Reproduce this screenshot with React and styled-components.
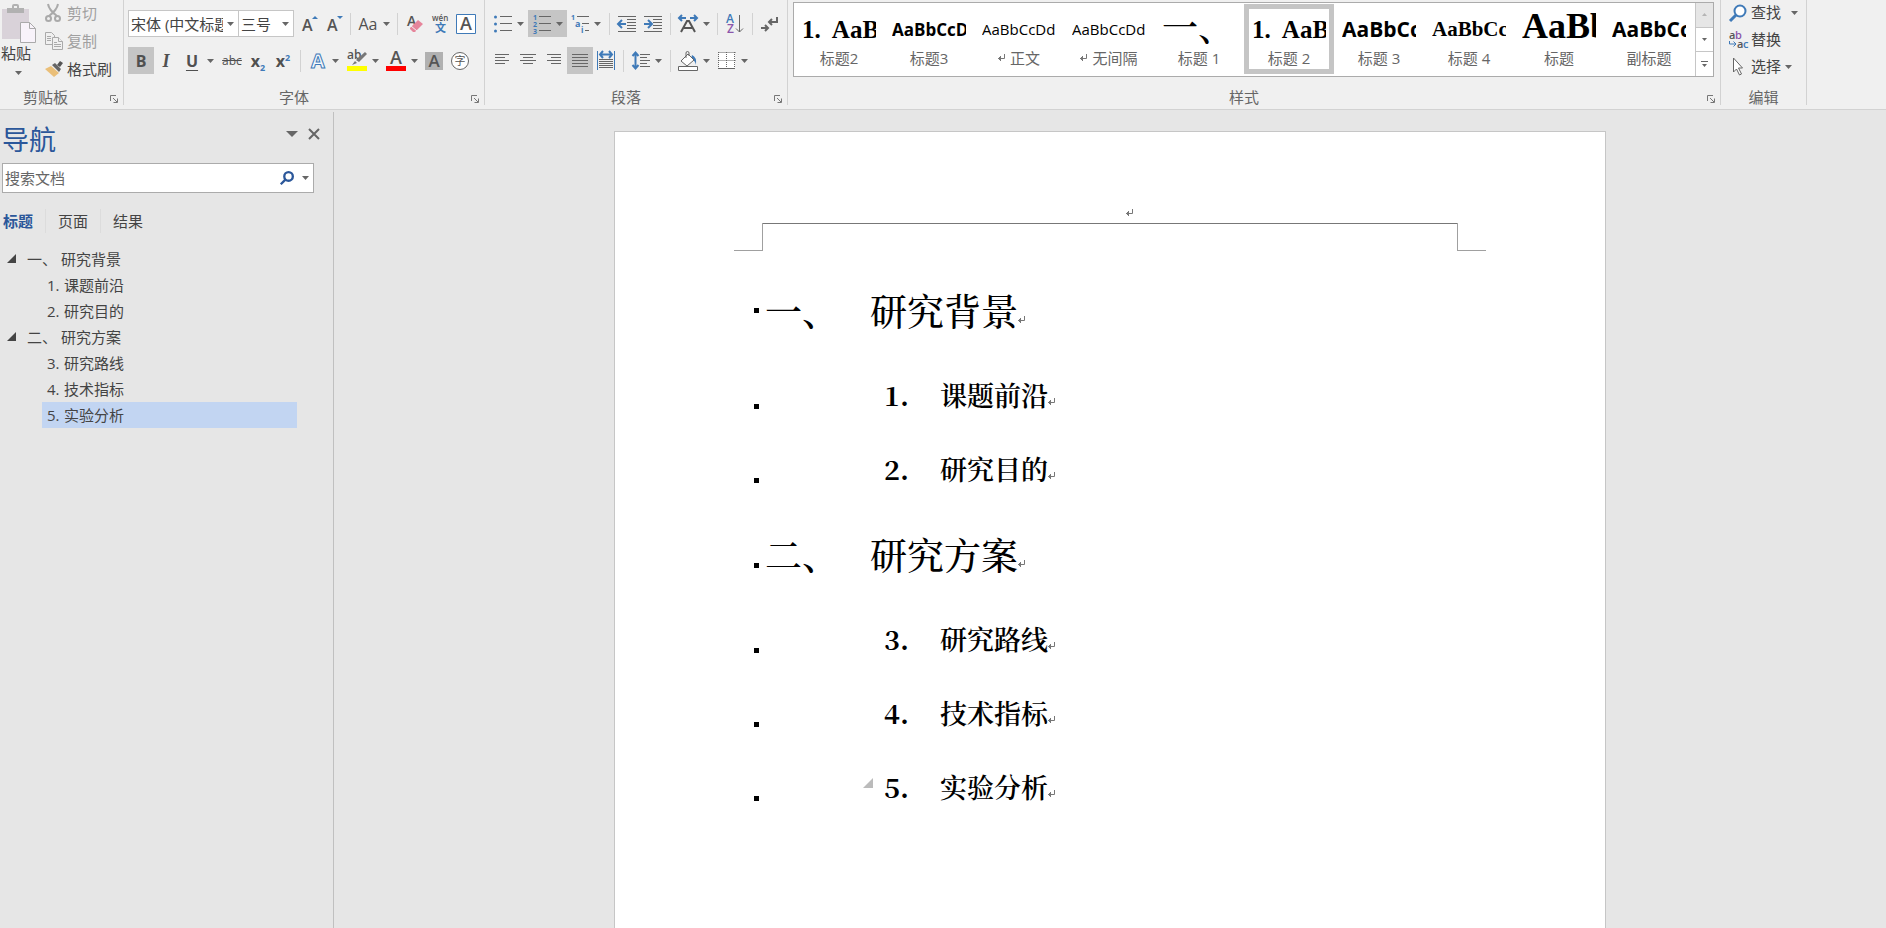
import React, { useState } from "react";
import styled, { createGlobalStyle } from "styled-components";

const GALLERY = [
    { preview: "1.  AaBb", label: "标题2", kind: "serif", size: 25 },
    { preview: "AaBbCcD", label: "标题3", kind: "sansBold", size: 17 },
    { preview: "AaBbCcDd", label: "正文", kind: "sans", size: 15, mark: true },
    { preview: "AaBbCcDd", label: "无间隔", kind: "sans", size: 15, mark: true },
    { preview: "一、", label: "标题 1", kind: "song", size: 36 },
    { preview: "1.  AaBb", label: "标题 2", kind: "serif", size: 25 },
    { preview: "AaBbCc", label: "标题 3", kind: "sansBold", size: 21 },
    { preview: "AaBbCc", label: "标题 4", kind: "serif", size: 21 },
    { preview: "AaBb", label: "标题", kind: "serif", size: 36 },
    { preview: "AaBbCc", label: "副标题", kind: "sansBold", size: 21 },
];

const OUTLINE = [
    { id: 1, level: 1, number: "一、", title: "研究背景" },
    { id: 2, level: 2, number: "1.", title: "课题前沿" },
    { id: 3, level: 2, number: "2.", title: "研究目的" },
    { id: 4, level: 1, number: "二、", title: "研究方案" },
    { id: 5, level: 2, number: "3.", title: "研究路线" },
    { id: 6, level: 2, number: "4.", title: "技术指标" },
    { id: 7, level: 2, number: "5.", title: "实验分析" },
];

const TABS = ["标题", "页面", "结果"];

const BLUE = "#3f7ab8";
const GREY = "#666";

function Caret({ big }) {
    return (
        <svg width={big ? 12 : 7} height={big ? 6 : 4} viewBox="0 0 8 4" preserveAspectRatio="none">
            <path d="M0 0h8L4 4z" fill={GREY} />
        </svg>
    );
}

function Lines({ rows, x = 0, color = GREY }) {
    return rows.map(([from, to, y]) => (
        <path key={y} d={`M${x + from} ${y + 0.5}H${x + to}`} stroke={color} />
    ));
}

function ReturnMark({ color = "#777" }) {
    return (
        <svg width="8" height="8" viewBox="0 0 8 8" fill="none" stroke={color}>
            <path d="M6.500 0v4.500H0M2.500 2v5M1.500 3v3" />
        </svg>
    );
}

function Launcher() {
    return (
        <svg width="8" height="8" viewBox="0 0 8 8" fill="none" stroke="#777">
            <path d="M.5 6V.5H6M3 3l4 4M7.5 3.5v4h-4" />
        </svg>
    );
}

function PasteIcon() {
    return (
        <svg width="36" height="40" viewBox="0 0 36 40">
            <path d="M2 5h27v30H2z" fill="#d9d2d9" />
            <path d="M7 4h5V2q0-2 2-2h3q2 0 2 2v2h5v5H7z" fill="#b1b1b1" />
            <path d="M14 2h3v2h-3z" fill="#f0f0f0" />
            <path d="M20.500 18.500h9l6 6v14h-15z" fill="#f8f3fa" stroke="#aaa" />
            <path d="M29.500 18.500v6h6" fill="none" stroke="#aaa" />
        </svg>
    );
}

function CutIcon() {
    return (
        <svg width="17" height="19" viewBox="0 0 17 19" fill="none" stroke="#aaa" strokeWidth="2">
            <path d="M3 0q1 6 9 12M13 0q-1 6-9 12" />
            <circle cx="3.500" cy="14.500" r="2.500" />
            <circle cx="12.500" cy="14.500" r="2.500" />
        </svg>
    );
}

function CopyIcon() {
    return (
        <svg width="18" height="19" viewBox="0 0 18 19" fill="#f0f0f0" stroke="#aaa">
            <path d="M.5.5h6l3 3v9h-9z" />
            <path d="M2 4.500h4M2 6.500h4M2 8.500h4" />
            <path d="M7.500 5.500h6l4 4v8h-10z" />
            <path d="M13.500 5.500v4h4M9 10.500h3M9 12.500h7M9 14.500h7" />
        </svg>
    );
}

function BrushIcon() {
    return (
        <svg width="18" height="17" viewBox="0 0 18 17">
            <path d="M0 8l6-3 8 7-5 4z" fill="#eabf79" />
            <path d="M7 4l3-2 6 6-2 3z" fill="#666" />
            <path d="M12 4l3-4 3 2-3 4z" fill="#555" />
        </svg>
    );
}

function GrowIcon({ down }) {
    return (
        <svg width="18" height="20" viewBox="0 0 18 20">
            <IconText x="2" y="17" fontSize="16" fontWeight="600">A</IconText>
            <path d={down ? "M12 2h6l-3 3z" : "M12 5h6l-3-3z"} fill={BLUE} />
        </svg>
    );
}

function EraserIcon() {
    return (
        <svg width="18" height="20" viewBox="0 0 18 20">
            <IconText x="1" y="12" fontSize="14" fontWeight="600">A</IconText>
            <path d="M4 14l8-8 5 4-8 8H7l-3-3z" fill="#e6859b" />
            <path d="M5 12l6 5" stroke="#f0f0f0" />
        </svg>
    );
}

function PinyinIcon() {
    return (
        <svg width="18" height="20" viewBox="0 0 18 20">
            <IconText x="1" y="7" fontSize="8" fontWeight="600">wén</IconText>
            <IconText x="4" y="18" fontSize="11" fontWeight="600" fill={BLUE}>文</IconText>
        </svg>
    );
}

function BoxedAIcon() {
    return (
        <svg width="20" height="20" viewBox="0 0 20 20">
            <path d="M.5.5h19v19H.5z" fill="#fff" stroke={BLUE} />
            <IconText x="10" y="16" fontSize="18" fontWeight="600" textAnchor="middle">A</IconText>
        </svg>
    );
}

function OutlineAIcon() {
    return (
        <svg width="18" height="20" viewBox="0 0 18 20">
            <IconText x="9" y="17" fontSize="20" fontWeight="700" textAnchor="middle" fill="#f4f8fc" stroke={BLUE}>A</IconText>
        </svg>
    );
}

function HighlightIcon() {
    return (
        <svg width="20" height="22" viewBox="0 0 20 22">
            <IconText x="0" y="9" fontSize="12" fontWeight="600">ab</IconText>
            <path d="M18 2l2 2-8 8-3-2zM8 11l2 2-5 2z" fill="#777" />
            <path d="M0 16h20v5H0z" fill="#ff0" />
        </svg>
    );
}

function FontColorIcon() {
    return (
        <svg width="20" height="22" viewBox="0 0 20 22">
            <IconText x="10" y="14" fontSize="18" fontWeight="600" textAnchor="middle">A</IconText>
            <path d="M0 16h20v5H0z" fill="red" />
        </svg>
    );
}

function ShadedAIcon() {
    return (
        <svg width="18" height="18" viewBox="0 0 18 18">
            <path d="M0 0h18v18H0z" fill="#b1b1b1" />
            <IconText x="9" y="15" fontSize="17" fontWeight="600" textAnchor="middle">A</IconText>
        </svg>
    );
}

function CircledIcon() {
    return (
        <svg width="18" height="18" viewBox="0 0 18 18">
            <circle cx="9" cy="9" r="8.500" fill="#fff" stroke="#666" />
            <IconText x="9" y="13" fontSize="11" textAnchor="middle">字</IconText>
        </svg>
    );
}

function BulletsIcon() {
    return (
        <svg width="18" height="18" viewBox="0 0 18 18">
            {[2, 9, 16].map((y) => (
                <circle key={y} cx="1.500" cy={y} r="1.500" fill={BLUE} />
            ))}
            <Lines rows={[[6, 18, 1], [6, 18, 8], [6, 18, 15]]} />
        </svg>
    );
}

function NumberingIcon() {
    return (
        <svg width="18" height="20" viewBox="0 0 18 20">
            {[1, 2, 3].map((n) => (
                <IconText key={n} x="0" y={n * 7 - 1} fontSize="7" fontWeight="700" fill={BLUE}>{n}</IconText>
            ))}
            <Lines rows={[[6, 18, 2], [6, 18, 9], [6, 18, 16]]} />
        </svg>
    );
}

function MultilevelIcon() {
    return (
        <svg width="18" height="20" viewBox="0 0 18 20">
            <IconText x="0" y="6" fontSize="7" fontWeight="700" fill={BLUE}>1</IconText>
            <IconText x="4" y="13" fontSize="9" fontWeight="700" fill={BLUE}>a</IconText>
            <IconText x="10" y="19" fontSize="8" fontWeight="700" fill={BLUE}>i</IconText>
            <Lines rows={[[6, 18, 2], [11, 18, 9], [14, 18, 16]]} />
        </svg>
    );
}

function IndentIcon({ more }) {
    return (
        <svg width="18" height="18" viewBox="0 0 18 18">
            <Lines rows={[[0, 18, 1], [9, 18, 4], [9, 18, 7], [9, 18, 10], [9, 18, 13], [0, 18, 16]]} />
            <path d={more ? "M0 9h7M4 5l4 4-4 4" : "M8 9H1M4 5L0 9l4 4"} fill="none" stroke={BLUE} strokeWidth="2" />
        </svg>
    );
}

function ScaleIcon() {
    return (
        <svg width="20" height="18" viewBox="0 0 20 18">
            <path d="M8 3H2M4 0L1 3l3 3M12 3h6M16 0l3 3-3 3" fill="none" stroke={BLUE} strokeWidth="2" />
            <path d="M3 17L9 6h2l6 11M6 13h8" fill="none" stroke="#555" strokeWidth="2" />
        </svg>
    );
}

function SortIcon() {
    return (
        <svg width="18" height="20" viewBox="0 0 18 20">
            <IconText x="0" y="9" fontSize="12" fontWeight="600" fill={BLUE}>A</IconText>
            <IconText x="1" y="19" fontSize="12" fontWeight="600" fill="#8b56ab">Z</IconText>
            <path d="M13.500 1v17M10 14.500l3.500 3.500 3.500-3.500" fill="none" stroke={GREY} />
        </svg>
    );
}

function MarksIcon() {
    return (
        <svg width="18" height="16" viewBox="0 0 18 16" fill="none" stroke="#666" strokeWidth="2">
            <path d="M16 1v5H9M11 3L8 6l3 3M0 12h7M4 9l3 3-3 3" />
        </svg>
    );
}

const ALIGN = {
    left: [[0, 14, 0], [0, 10, 3], [0, 14, 6], [0, 10, 9]],
    center: [[0, 16, 0], [3, 13, 3], [0, 16, 6], [3, 13, 9]],
    right: [[0, 14, 0], [4, 14, 3], [0, 14, 6], [4, 14, 9]],
    justify: [[0, 16, 0], [0, 16, 3], [0, 16, 6], [0, 16, 9], [0, 16, 12]],
};

function AlignIcon({ kind }) {
    return (
        <svg width="16" height="13" viewBox="0 0 16 13">
            <Lines rows={ALIGN[kind]} x={kind === "left" || kind === "right" ? 1 : 0} />
        </svg>
    );
}

function DistributeIcon() {
    return (
        <svg width="18" height="19" viewBox="0 0 18 19">
            <path d="M.5 0v19M17.500 0v19" stroke={BLUE} />
            <path d="M3 3.500h12M6 0L3 3.500 6 7M12 0l3 3.500L12 7" fill="none" stroke={BLUE} strokeWidth="2" />
            <Lines rows={[[2, 16, 8], [2, 16, 10], [2, 16, 12], [2, 16, 14], [2, 16, 16]]} />
        </svg>
    );
}

function LineSpacingIcon() {
    return (
        <svg width="18" height="19" viewBox="0 0 18 19">
            <path d="M3.500 2v15M.5 5l3-3.500L6.500 5M.5 14l3 3.500 3-3.500" fill="none" stroke={BLUE} strokeWidth="2" />
            <Lines rows={[[8, 18, 3], [8, 15, 6], [8, 18, 9], [8, 15, 12], [8, 18, 15]]} />
        </svg>
    );
}

function BucketIcon() {
    return (
        <svg width="20" height="20" viewBox="0 0 20 20">
            <path d="M14 4q5 2 4 10-1-5-5-6z" fill={BLUE} />
            <path d="M10 3l6 6-7 6-6-5z" fill="#fff" stroke={GREY} />
            <path d="M8 7V2q0-1.500 1.500-1.500T11 2v3" fill="none" stroke={GREY} />
            <path d="M.5 15.500h19v4H.5z" fill="#fff" stroke={GREY} />
        </svg>
    );
}

function BordersIcon() {
    return (
        <svg width="18" height="18" viewBox="0 0 18 18">
            <path d="M1 1h16v16H1z" fill="#fff" />
            <path d="M.5.5h17M.5 8.500h17M.5 0v17M8.500 0v17M16.500 0v17" stroke="#666" strokeDasharray="1 1" fill="none" />
            <path d="M0 16.500h17" stroke="#666" />
        </svg>
    );
}

function FindIcon({ size = 18, color = BLUE }) {
    return (
        <svg width={size} height={size} viewBox="0 0 18 18" fill="none" stroke={color} strokeWidth={size < 18 ? 3 : 2}>
            <circle cx="11" cy="7" r="5.500" fill="#fff" />
            <path d="M7 11l-6 6" strokeWidth="3" />
        </svg>
    );
}

function ReplaceIcon() {
    return (
        <svg width="20" height="18" viewBox="0 0 20 18">
            <IconText x="0" y="8" fontSize="11" fontWeight="600">a</IconText>
            <IconText x="6" y="8" fontSize="11" fontWeight="600" fill="#8b56ab">b</IconText>
            <IconText x="8" y="17" fontSize="11" fontWeight="600">a</IconText>
            <IconText x="14" y="17" fontSize="11" fontWeight="600" fill={BLUE}>c</IconText>
            <path d="M.5 10v3h6M4.500 10.500L7 13l-2.500 2.500" fill="none" stroke={BLUE} />
        </svg>
    );
}

function SelectIcon() {
    return (
        <svg width="18" height="19" viewBox="0 0 18 19">
            <path d="M4.500 1v14l3-3 3 6 2-1-3-6h4z" fill="#fff" stroke={GREY} />
        </svg>
    );
}

function Tool({ label, width = 26, active, drop, children }) {
    return (
        <ToolButton type="button" aria-label={label} title={label} $width={width} $active={active}>
            {children}
            {drop && <Caret />}
        </ToolButton>
    );
}

function Clipboard() {
    return (
        <Group $width={124}>
            <ClipboardTools>
                <PasteButton type="button">
                    <PasteIcon />
                    <span>粘贴</span>
                    <Caret />
                </PasteButton>
                <CommandList>
                    <Command type="button" disabled><IconSlot><CutIcon /></IconSlot>剪切</Command>
                    <Command type="button" disabled><IconSlot><CopyIcon /></IconSlot>复制</Command>
                    <Command type="button"><IconSlot><BrushIcon /></IconSlot>格式刷</Command>
                </CommandList>
            </ClipboardTools>
            <GroupFooter $left={23}>
                <span>剪贴板</span>
                <LaunchButton type="button" aria-label="剪贴板设置"><Launcher /></LaunchButton>
            </GroupFooter>
        </Group>
    );
}

function FontGroup() {
    return (
        <Group $width={361}>
            <ToolRows>
                <ToolRow>
                    <Combo $width={111}>
                        <select aria-label="字体">
                            <option>宋体 (中文标题)</option>
                        </select>
                        <Caret />
                    </Combo>
                    <Combo $width={56} $joined>
                        <select aria-label="字号">
                            <option>三号</option>
                        </select>
                        <Caret />
                    </Combo>
                    <Spacer />
                    <Tool label="增大字号"><GrowIcon /></Tool>
                    <Tool label="减小字号" width={24}><GrowIcon down /></Tool>
                    <Divider />
                    <Tool label="更改大小写" width={38} drop><Glyph $size={16}>Aa</Glyph></Tool>
                    <Divider />
                    <Tool label="清除格式"><EraserIcon /></Tool>
                    <Tool label="拼音指南" width={24}><PinyinIcon /></Tool>
                    <Tool label="字符边框" width={28}><BoxedAIcon /></Tool>
                </ToolRow>
                <ToolRow>
                    <Tool label="加粗" active><Glyph $size={16} $bold>B</Glyph></Tool>
                    <Tool label="倾斜" width={24}><Glyph $size={18} $bold $italic>I</Glyph></Tool>
                    <Tool label="下划线" width={40} drop><Glyph $size={16} $bold $line="underline" $width={20}>U</Glyph></Tool>
                    <Tool label="删除线" width={28}><Glyph $size={12} $line="line-through">abc</Glyph></Tool>
                    <Tool label="下标" width={24}><Glyph $size={16} $bold>x<sub>2</sub></Glyph></Tool>
                    <Tool label="上标"><Glyph $size={16} $bold>x<sup>2</sup></Glyph></Tool>
                    <Divider />
                    <Tool label="文本效果" width={38} drop><OutlineAIcon /></Tool>
                    <Tool label="突出显示" width={40} drop><HighlightIcon /></Tool>
                    <Tool label="字体颜色" width={38} drop><FontColorIcon /></Tool>
                    <Tool label="字符底纹"><ShadedAIcon /></Tool>
                    <Tool label="带圈字符"><CircledIcon /></Tool>
                </ToolRow>
            </ToolRows>
            <GroupFooter $launcher>
                <span>字体</span>
                <LaunchButton type="button" aria-label="字体设置"><Launcher /></LaunchButton>
            </GroupFooter>
        </Group>
    );
}

function ParagraphGroup() {
    return (
        <Group $width={303}>
            <ToolRows>
                <ToolRow>
                    <Tool label="项目符号" width={39} drop><BulletsIcon /></Tool>
                    <Tool label="编号" width={39} drop active><NumberingIcon /></Tool>
                    <Tool label="多级列表" width={38} drop><MultilevelIcon /></Tool>
                    <Divider />
                    <Tool label="减少缩进量"><IndentIcon /></Tool>
                    <Tool label="增加缩进量"><IndentIcon more /></Tool>
                    <Divider />
                    <Tool label="中文版式" width={38} drop><ScaleIcon /></Tool>
                    <Divider />
                    <Tool label="排序"><SortIcon /></Tool>
                    <Divider />
                    <Tool label="显示编辑标记"><MarksIcon /></Tool>
                </ToolRow>
                <ToolRow>
                    <Tool label="左对齐"><AlignIcon kind="left" /></Tool>
                    <Tool label="居中"><AlignIcon kind="center" /></Tool>
                    <Tool label="右对齐"><AlignIcon kind="right" /></Tool>
                    <Tool label="两端对齐" active><AlignIcon kind="justify" /></Tool>
                    <Tool label="分散对齐"><DistributeIcon /></Tool>
                    <Divider />
                    <Tool label="行距" width={38} drop><LineSpacingIcon /></Tool>
                    <Divider />
                    <Tool label="底纹" width={38} drop><BucketIcon /></Tool>
                    <Tool label="边框" width={39} drop><BordersIcon /></Tool>
                </ToolRow>
            </ToolRows>
            <GroupFooter $launcher>
                <span>段落</span>
                <LaunchButton type="button" aria-label="段落设置"><Launcher /></LaunchButton>
            </GroupFooter>
        </Group>
    );
}

function StylesGroup() {
    const [current, setCurrent] = useState(5);

    return (
        <Group $width={933}>
            <Gallery>
                <GalleryItems>
                    {GALLERY.map((item, i) => (
                        <StyleCell key={i} type="button" $active={i === current} onClick={() => setCurrent(i)}>
                            <Preview $large={item.size > 30}>
                                <PreviewText $kind={item.kind} $size={item.size}>{item.preview}</PreviewText>
                            </Preview>
                            <StyleName>
                                {item.mark && <ReturnMark />}
                                {item.label}
                            </StyleName>
                        </StyleCell>
                    ))}
                </GalleryItems>
                <GalleryScroll>
                    <ScrollButton type="button" aria-label="上一行" disabled>
                        <svg width="5" height="3" viewBox="0 0 5 3"><path d="M0 3h5L2.500 0z" fill="#b5b5b5" /></svg>
                    </ScrollButton>
                    <ScrollButton type="button" aria-label="下一行">
                        <svg width="5" height="3" viewBox="0 0 5 3"><path d="M0 0h5L2.500 3z" fill={GREY} /></svg>
                    </ScrollButton>
                    <ScrollButton type="button" aria-label="其他">
                        <svg width="7" height="6" viewBox="0 0 7 6"><path d="M0 0h7v1H0zM1 3h5L3.500 6z" fill={GREY} /></svg>
                    </ScrollButton>
                </GalleryScroll>
            </Gallery>
            <GroupFooter $launcher>
                <span>样式</span>
                <LaunchButton type="button" aria-label="样式设置"><Launcher /></LaunchButton>
            </GroupFooter>
        </Group>
    );
}

function EditingGroup() {
    return (
        <Group $width={86}>
            <EditList>
                <Command type="button"><IconSlot><FindIcon /></IconSlot>查找<CaretSlot $wide><Caret /></CaretSlot></Command>
                <Command type="button"><IconSlot><ReplaceIcon /></IconSlot>替换</Command>
                <Command type="button"><IconSlot><SelectIcon /></IconSlot>选择<CaretSlot><Caret /></CaretSlot></Command>
            </EditList>
            <GroupFooter>
                <span>编辑</span>
            </GroupFooter>
        </Group>
    );
}

function Navigation({ selected, onSelect }) {
    const [tab, setTab] = useState("标题");

    return (
        <NavPane>
            <NavHeader>
                <h2>导航</h2>
                <PlainButton type="button" aria-label="任务窗格选项"><Caret big /></PlainButton>
                <PlainButton type="button" aria-label="关闭">
                    <svg width="12" height="12" viewBox="0 0 12 12" stroke="#666" strokeWidth="2"><path d="M1 1l10 10M11 1L1 11" /></svg>
                </PlainButton>
            </NavHeader>
            <SearchBox>
                <input type="text" aria-label="搜索文档" placeholder="搜索文档" />
                <PlainButton type="button" aria-label="搜索"><FindIcon size={14} color="#2b579a" /></PlainButton>
                <PlainButton type="button" aria-label="搜索选项"><Caret /></PlainButton>
            </SearchBox>
            <Tabs>
                {TABS.map((name) => (
                    <TabButton key={name} type="button" $active={name === tab} onClick={() => setTab(name)}>
                        {name}
                    </TabButton>
                ))}
            </Tabs>
            <Tree>
                {OUTLINE.map((item) => (
                    <TreeItem key={item.id} $level={item.level} $active={item.id === selected}>
                        {item.level === 1 && (
                            <svg width="10" height="10" viewBox="0 0 10 10"><path d="M9 0v9H0z" fill="#444" /></svg>
                        )}
                        <a href={`#h${item.id}`} onClick={() => onSelect(item.id)}>
                            <TreeNumber $level={item.level}>{item.number}</TreeNumber>
                            {item.title}
                        </a>
                    </TreeItem>
                ))}
            </Tree>
        </NavPane>
    );
}

function Document({ selected }) {
    return (
        <Workspace>
            <Page>
                <PageHeader><ReturnMark /></PageHeader>
                <MarginMarks>
                    <Corner $side="left" />
                    <HeaderRule />
                    <Corner $side="right" />
                </MarginMarks>
                <PageBody>
                    {OUTLINE.map((item, i) => (
                        <HeadingRow key={item.id} id={`h${item.id}`} as={item.level === 1 ? "h1" : "h2"} $level={item.level}>
                            <Square $low={i > 0} />
                            <Fold>
                                {item.level === 2 && item.id === selected && (
                                    <svg width="10" height="10" viewBox="0 0 10 10"><path d="M10 0v10H0z" fill="#bbb" /></svg>
                                )}
                            </Fold>
                            <HeadingNumber $level={item.level}>{item.number}</HeadingNumber>
                            {item.title}
                            <EndMark $level={item.level}><ReturnMark /></EndMark>
                        </HeadingRow>
                    ))}
                </PageBody>
            </Page>
        </Workspace>
    );
}

export default function App() {
    const [selected, setSelected] = useState(7);

    return (
        <AppContainer>
            <GlobalStyle />
            <Ribbon>
                <Clipboard />
                <FontGroup />
                <ParagraphGroup />
                <StylesGroup />
                <EditingGroup />
            </Ribbon>
            <Main>
                <Navigation selected={selected} onSelect={setSelected} />
                <Document selected={selected} />
            </Main>
        </AppContainer>
    );
}

const GlobalStyle = createGlobalStyle`
* {
    box-sizing: border-box;
}
body {
    margin: 0;
    background-color: #e6e6e6;
    color: #444;
    font-family: "Open Sans", "Noto Sans CJK SC", sans-serif;
    font-size: 15px;
    overflow: hidden;
}
button, input, select {
    font: inherit;
    color: inherit;
    border: none;
    padding: 0;
    margin: 0;
    background: none;
}
h1, h2, ul {
    margin: 0;
    padding: 0;
    font-weight: 400;
}
svg {
    display: block;
    flex-shrink: 0;
    overflow: visible;
}
`

const AppContainer = styled.div`
display: flex;
flex-direction: column;
height: 100vh;
`

const Ribbon = styled.header`
display: flex;
flex-shrink: 0;
height: 110px;
background-color: #f0f0f0;
border-bottom: 1px solid #d2d2d2;
`

const Group = styled.section`
display: flex;
flex-direction: column;
flex-shrink: 0;
justify-content: space-between;
width: ${(props) => props.$width}px;
height: 105px;
border-right: 1px solid #d2d2d2;
`

const GroupFooter = styled.div`
display: flex;
align-items: center;
justify-content: ${(props) => props.$left ? "flex-start" : "center"};
padding-left: ${(props) => props.$left || 0}px;
padding-right: ${(props) => props.$launcher ? 20 : 0}px;
height: 20px;
line-height: 20px;
margin-bottom: -2px;
color: #666;
position: relative;
`

const LaunchButton = styled.button`
position: absolute;
right: 5px;
bottom: 4px;
`

const ClipboardTools = styled.div`
display: flex;
`

const PasteButton = styled.button`
display: flex;
flex-direction: column;
align-items: center;
width: 36px;
margin-top: 4px;
span {
    line-height: 18px;
    width: 34px;
    text-align: left;
    margin-bottom: 9px;
}
`

const CommandList = styled.div`
display: flex;
flex-direction: column;
gap: 1px;
padding-left: 9px;
`

const EditList = styled(CommandList)`
gap: 0;
padding-left: 8px;
margin-top: -1px;
`

const Command = styled.button`
display: flex;
align-items: center;
height: 27px;
line-height: 27px;
color: ${(props) => props.disabled ? "#a0a0a0" : "#444"};
`

const IconSlot = styled.span`
display: flex;
width: 22px;
`

const CaretSlot = styled.span`
padding-left: ${(props) => props.$wide ? 10 : 4}px;
`

const ToolRows = styled.div`
display: flex;
flex-direction: column;
gap: 10px;
padding: 10px 0 0 4px;
`

const ToolRow = styled.div`
display: flex;
align-items: center;
height: 27px;
`

const ToolButton = styled.button`
display: flex;
align-items: center;
justify-content: center;
gap: 5px;
flex-shrink: 0;
width: ${(props) => props.$width}px;
height: 27px;
background-color: ${(props) => props.$active ? "#c5c5c5" : "transparent"};
`

const Glyph = styled.span`
font-family: ${(props) => props.$italic ? '"Liberation Serif", serif' : '"Open Sans", sans-serif'};
font-size: ${(props) => props.$size}px;
font-weight: ${(props) => props.$bold ? 700 : 400};
font-style: ${(props) => props.$italic ? "italic" : "normal"};
text-decoration: ${(props) => props.$line || "none"};
text-underline-offset: 3px;
width: ${(props) => props.$width ? props.$width + "px" : "auto"};
line-height: 20px;
color: #505050;
sub, sup {
    font-size: 9px;
    line-height: 0;
    color: ${BLUE};
}
`

const IconText = styled.text.attrs((props) => ({ fill: props.fill || "#555" }))`
font-family: "Open Sans", "Noto Sans CJK SC", sans-serif;
`

const Divider = styled.span`
flex-shrink: 0;
width: 1px;
height: 22px;
margin: 0 4px;
background-color: #d2d2d2;
`

const Spacer = styled.span`
width: 2px;
`

const Combo = styled.div`
display: flex;
align-items: center;
width: ${(props) => props.$width}px;
height: 27px;
margin-left: ${(props) => props.$joined ? -1 : 0}px;
padding-right: 4px;
background-color: #fff;
border: 1px solid #c6c6c6;
select {
    appearance: none;
    flex: 1;
    min-width: 0;
    height: 25px;
    margin-right: 4px;
    padding-left: 2px;
    outline: none;
    overflow: hidden;
    text-overflow: clip;
}
`

const Gallery = styled.div`
display: flex;
width: 921px;
height: 75px;
margin: 2px 0 0 5px;
border: 1px solid #ababab;
background-color: #fff;
`

const GalleryItems = styled.div`
display: flex;
flex: 1;
`

const StyleCell = styled.button`
display: flex;
flex-direction: column;
align-items: center;
width: 90px;
height: 70px;
margin-top: 1px;
padding: 0 3px;
border: 5px solid ${(props) => props.$active ? "#c5c5c5" : "transparent"};
`

const Preview = styled.span`
display: flex;
align-items: center;
width: 74px;
height: 40px;
padding-bottom: ${(props) => props.$large ? 6 : 0}px;
flex-shrink: 0;
overflow: hidden;
white-space: pre;
color: #000;
`

const PREVIEW_FONTS = {
    serif: '700 1em "Liberation Serif", serif',
    sans: '400 1em "Open Sans", sans-serif',
    sansBold: '700 1em "Open Sans", sans-serif',
    song: '500 1em "Noto Serif CJK SC", "Noto Sans CJK SC", serif',
}

const PreviewText = styled.span`
font: ${(props) => PREVIEW_FONTS[props.$kind]};
font-size: ${(props) => props.$size}px;
line-height: 1;
`

const StyleName = styled.span`
display: flex;
align-items: center;
gap: 4px;
line-height: 18px;
white-space: nowrap;
color: #666;
`

const GalleryScroll = styled.div`
display: flex;
flex-direction: column;
width: 18px;
border-left: 1px solid #c6c6c6;
`

const ScrollButton = styled.button`
display: flex;
flex: 1;
align-items: center;
justify-content: center;
background-color: ${(props) => props.disabled ? "#e6e6e6" : "#fff"};
& + & {
    border-top: 1px solid #c6c6c6;
}
`

const Main = styled.main`
display: flex;
flex: 1;
min-height: 0;
`

const NavPane = styled.nav`
display: flex;
flex-direction: column;
flex-shrink: 0;
width: 334px;
margin-top: 2px;
border-right: 1px solid #c0c0c0;
`

const NavHeader = styled.div`
display: flex;
align-items: center;
gap: 10px;
padding: 0 13px 0 2px;
height: 51px;
h2 {
    flex: 1;
    font-size: 27px;
    line-height: 40px;
    padding-top: 5px;
    color: #2b579a;
}
button {
    margin-bottom: 8px;
}
`

const PlainButton = styled.button`
display: flex;
align-items: center;
justify-content: center;
`

const SearchBox = styled.div`
display: flex;
align-items: center;
gap: 8px;
height: 30px;
margin: 0 19px 0 2px;
padding: 0 4px 0 2px;
background-color: #fff;
border: 1px solid #ababab;
input {
    flex: 1;
    min-width: 0;
    height: 26px;
    outline: none;
}
input::placeholder {
    color: #666;
    opacity: 1;
}
`

const Tabs = styled.div`
display: flex;
padding: 16px 0 13px 3px;
`

const TabButton = styled.button`
height: 24px;
line-height: 24px;
padding-right: 12px;
color: ${(props) => props.$active ? "#2b579a" : "#444"};
font-weight: ${(props) => props.$active ? 700 : 400};
& + & {
    padding-left: 12px;
    border-left: 1px solid #dcdcdc;
}
`

const Tree = styled.ul`
list-style: none;
`

const TreeItem = styled.li`
display: flex;
align-items: center;
gap: 10px;
height: 26px;
line-height: 26px;
margin: ${(props) => props.$level === 1 ? "0 36px 0 7px" : "0 36px 0 42px"};
padding-left: ${(props) => props.$level === 1 ? 0 : 5}px;
background-color: ${(props) => props.$active ? "#c2d5f2" : "transparent"};
a {
    display: flex;
    color: inherit;
    text-decoration: none;
}
`

const TreeNumber = styled.span`
width: ${(props) => props.$level === 1 ? 34 : 17}px;
white-space: nowrap;
`

const Workspace = styled.div`
display: flex;
flex: 1;
min-width: 0;
justify-content: center;
padding-top: 21px;
`

const Page = styled.article`
width: 992px;
background-color: #fff;
border: 1px solid #c6c6c6;
border-bottom: none;
`

const PageHeader = styled.div`
display: flex;
align-items: flex-end;
justify-content: center;
height: 87px;
padding: 0 0 2px 40px;
`

const MarginMarks = styled.div`
display: flex;
justify-content: center;
margin-top: 4px;
`

const Corner = styled.span`
width: 29px;
height: 28px;
border-bottom: 1px solid #a0a0a0;
border-${(props) => props.$side === "left" ? "right" : "left"}: 1px solid #a0a0a0;
`

const HeaderRule = styled.span`
width: 694px;
border-top: 1px solid #777;
`

const PageBody = styled.div`
padding: 13px 0 0 139px;
color: #000;
`

const HeadingRow = styled.h1`
display: flex;
align-items: center;
height: ${(props) => props.$level === 1 ? 96 : 74}px;
padding-bottom: 4px;
font-family: "Noto Serif CJK SC", "Noto Sans CJK SC", serif;
font-size: ${(props) => props.$level === 1 ? 37 : 27}px;
font-weight: ${(props) => props.$level === 1 ? 500 : 600};
line-height: 48px;
white-space: nowrap;
`

const Square = styled.span`
width: 5px;
height: 5px;
margin-top: ${(props) => props.$low ? 23 : 0}px;
margin-right: 6px;
background-color: #000;
`

const Fold = styled.span`
display: flex;
justify-content: flex-end;
width: 108px;
margin-right: -108px;
margin-bottom: 8px;
`

const HeadingNumber = styled.span`
width: ${(props) => props.$level === 1 ? 105 : 175}px;
padding-left: ${(props) => props.$level === 1 ? 0 : 119}px;
font-weight: ${(props) => props.$level === 1 ? 500 : 700};
`

const EndMark = styled.span`
padding-top: ${(props) => props.$level === 1 ? 20 : 14}px;
`
